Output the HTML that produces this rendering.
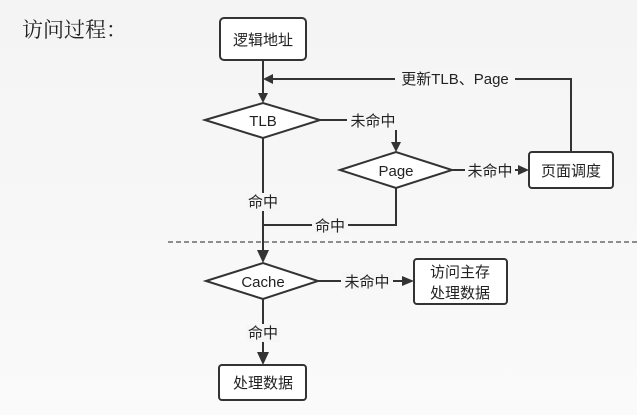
<!DOCTYPE html>
<html><head><meta charset="utf-8"><style>
html,body{margin:0;padding:0;width:637px;height:415px;overflow:hidden;background:#f7f7f7;}
svg{display:block}
text{font-family:"Liberation Sans","Noto Sans CJK SC",sans-serif;fill:#222;}
</style></head><body>
<svg width="637" height="415" viewBox="0 0 637 415">
<defs><linearGradient id="g" x1="0" y1="0" x2="0" y2="1"><stop offset="0" stop-color="#f4f4f4"/><stop offset="1" stop-color="#fafafa"/></linearGradient></defs>
<rect width="637" height="415" fill="url(#g)"/>
<text x="22" y="37" font-size="21" style="font-family:'Liberation Serif','Noto Serif CJK SC',serif">访问过程：</text>
<g stroke="#333" stroke-width="2" fill="none">
<rect x="220" y="18" width="86" height="42" rx="4" fill="#fff"/>
<line x1="263" y1="60" x2="263" y2="96"/>
<polyline points="571,152 571,79 272,79"/>
<polygon points="205,120 263,103 320,120 263,138" fill="#fff"/>
<line x1="320" y1="120" x2="396" y2="120"/>
<line x1="396" y1="120" x2="396" y2="145"/>
<polygon points="340,170 396,152 452,170 396,188" fill="#fff"/>
<line x1="452" y1="170" x2="518" y2="170"/>
<rect x="529" y="152" width="84" height="36" rx="3" fill="#fff"/>
<polyline points="396,188 396,225 263,225"/>
<line x1="263" y1="138" x2="263" y2="250"/>
<polygon points="206,281 263,263 318,281 263,299" fill="#fff"/>
<line x1="318" y1="281" x2="404" y2="281"/>
<rect x="414" y="259" width="93" height="45" rx="3" fill="#fff"/>
<line x1="263" y1="299" x2="263" y2="353"/>
<rect x="219" y="365" width="87" height="35" rx="3" fill="#fff"/>
</g>
<line x1="168" y1="242" x2="637" y2="242" stroke="#222" stroke-width="1" stroke-dasharray="5,3"/>
<g fill="#333">
<polygon points="263,79 273,74 273,84"/>
<polygon points="263,103 258,93 268,93"/>
<polygon points="396,152 391,142 401,142"/>
<polygon points="529,170 518,165 518,175"/>
<polygon points="263,263 257,250 269,250"/>
<polygon points="414,281 402,276 402,286"/>
<polygon points="263,365 257,352 269,352"/>
</g>
<g font-size="15" text-anchor="middle">
<text x="263" y="45">逻辑地址</text>
<text x="263" y="126">TLB</text>
<text x="396" y="176">Page</text>
<text x="571" y="176">页面调度</text>
<text x="263" y="287">Cache</text>
<text x="460" y="277">访问主存</text>
<text x="460" y="298">处理数据</text>
<text x="263" y="388">处理数据</text>
</g>
<g font-size="15" text-anchor="middle">
<rect x="395" y="70" width="120" height="18" fill="#f6f6f6"/>
<text x="455" y="84">更新TLB、Page</text>
<rect x="347" y="112" width="52" height="18" fill="#f6f6f6"/>
<text x="373" y="126">未命中</text>
<rect x="465" y="162" width="50" height="18" fill="#f6f6f6"/>
<text x="490" y="176">未命中</text>
<rect x="246" y="193" width="34" height="18" fill="#f6f6f6"/>
<text x="263" y="207">命中</text>
<rect x="312" y="216" width="36" height="18" fill="#f6f6f6"/>
<text x="330" y="231">命中</text>
<rect x="341" y="272" width="52" height="18" fill="#f6f6f6"/>
<text x="367" y="287">未命中</text>
<rect x="246" y="324" width="34" height="18" fill="#f6f6f6"/>
<text x="263" y="338">命中</text>
</g>
</svg>
</body></html>
